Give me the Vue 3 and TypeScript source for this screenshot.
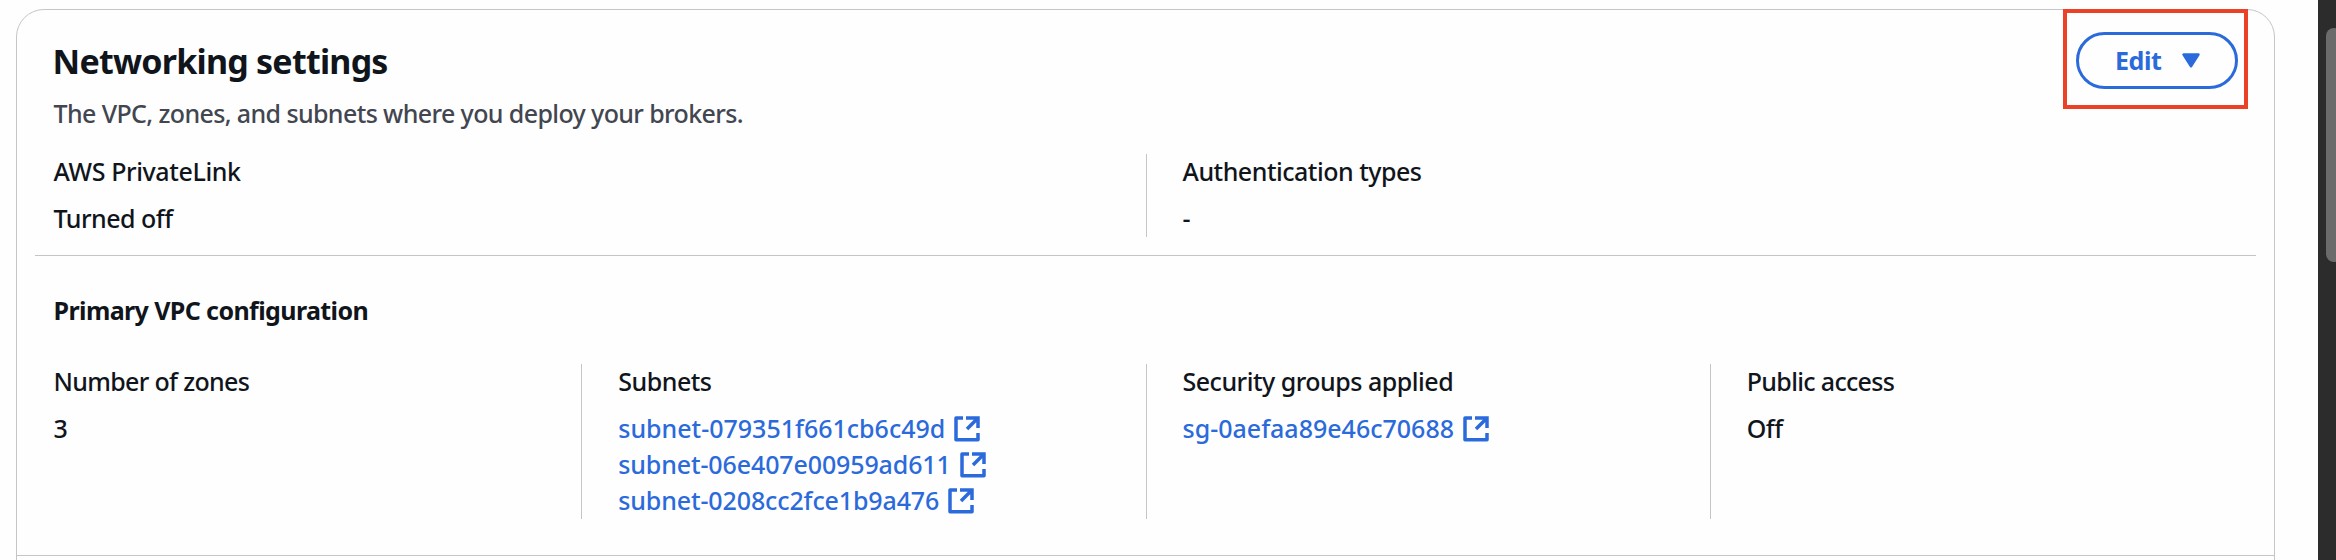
<script setup lang="ts">
interface Field {
  label: string
  labelClass: string
  values: string[]
  link?: boolean
}

const general: Field[] = [
  { label: 'AWS PrivateLink', labelClass: 'loose', values: ['Turned off'] },
  { label: 'Authentication types', labelClass: 'normal', values: ['-'] },
]

const primary: Field[] = [
  { label: 'Number of zones', labelClass: 'tight', values: ['3'] },
  {
    label: 'Subnets',
    labelClass: 'normal',
    link: true,
    values: ['subnet-079351f661cb6c49d', 'subnet-06e407e00959ad611', 'subnet-0208cc2fce1b9a476'],
  },
  { label: 'Security groups applied', labelClass: 'normal', link: true, values: ['sg-0aefaa89e46c70688'] },
  { label: 'Public access', labelClass: 'tight', values: ['Off'] },
]
</script>

<template>
  <div class="page">
    <section class="card">
      <header class="header">
        <div class="heading">
          <h2>Networking settings</h2>
          <p>The VPC, zones, and subnets where you deploy your brokers.</p>
        </div>
        <div class="highlight">
          <button class="edit" type="button">
            <span>Edit</span>
            <svg class="caret" viewBox="0 0 18 15">
              <path d="M1.5 1.5H16.5L9 13.3Z" fill="currentColor" stroke="currentColor" stroke-width="2.4" stroke-linejoin="round" />
            </svg>
          </button>
        </div>
      </header>

      <div class="grid two">
        <div v-for="f in general" :key="f.label" class="field">
          <div class="label" :class="f.labelClass">{{ f.label }}</div>
          <div v-for="v in f.values" :key="v" class="value">{{ v }}</div>
        </div>
      </div>

      <hr class="rule" />
      <h3>Primary VPC configuration</h3>

      <div class="grid four">
        <div v-for="f in primary" :key="f.label" class="field">
          <div class="label" :class="f.labelClass">{{ f.label }}</div>
          <template v-for="v in f.values" :key="v">
            <a v-if="f.link" class="link">
              <span>{{ v }}</span>
              <svg class="external" viewBox="0 0 26 26" fill="none" stroke="currentColor" stroke-width="3.5">
                <path d="M9 2H2V23.7H24V17" stroke-linejoin="round" />
                <path d="M12 2H24V12M24 2L13 13" />
              </svg>
            </a>
            <div v-else class="value">{{ v }}</div>
          </template>
        </div>
      </div>
      <div class="footer"></div>
    </section>
    <div class="scrollbar"><div class="thumb"></div></div>
  </div>
</template>

<style>
body {
  margin: 0;
  background: #fefefe;
}
</style>

<style scoped>
.page {
  display: flex;
  justify-content: space-between;
  box-sizing: border-box;
  width: 2336px;
  height: 560px;
  padding-left: 16px;
  overflow: hidden;
  background: #fefefe;
  color: #10151c;
  font: 500 25px/36px 'Noto Sans', 'Open Sans', sans-serif;
}
.card {
  box-sizing: border-box;
  width: 2259px;
  height: 600px;
  margin-top: 9px;
  border: 1px solid #c4c5c9;
  border-radius: 28px 28px 0 0;
}
.header {
  display: flex;
  justify-content: space-between;
  height: 144px;
  padding: 0 26px 0 36.5px;
}
h2,
h3,
p {
  margin: 0;
}
h2 {
  margin: 27px 0 0 -1px;
  font-size: 34px;
  line-height: 48px;
  font-weight: 700;
  letter-spacing: -0.76px;
}
p {
  margin-top: 10px;
  color: #424650;
  letter-spacing: -0.61px;
}
.highlight {
  display: flex;
  align-items: flex-start;
  box-sizing: border-box;
  width: 185px;
  height: 100px;
  margin-top: -1px;
  padding: 19px 0 0 9px;
  border: 4px solid #eb4127;
}
.edit {
  display: flex;
  align-items: center;
  box-sizing: border-box;
  width: 162px;
  height: 57px;
  padding: 0 0 0 36px;
  border: 3px solid #2b6adb;
  border-radius: 29px;
  background: transparent;
  color: #2b6adb;
  font: inherit;
  font-weight: 700;
  letter-spacing: -0.4px;
}
.edit span {
  padding-bottom: 2px;
  line-height: 34px;
}
.caret {
  width: 18px;
  height: 15px;
  margin-left: 20px;
}
.grid {
  display: grid;
}
.two {
  grid-template-columns: repeat(2, 1fr);
}
.four {
  grid-template-columns: repeat(4, 1fr);
}
.field {
  padding-left: 36px;
}
.field:first-child {
  padding-left: 36.5px;
}
.field + .field {
  border-left: 1px solid #c4c5c9;
}
.label {
  margin-bottom: 13px;
  line-height: 34px;
}
.loose {
  letter-spacing: -0.38px;
}
.normal {
  letter-spacing: -0.49px;
}
.tight {
  letter-spacing: -0.67px;
}
.value {
  padding-bottom: 2px;
  line-height: 34px;
  letter-spacing: -0.5px;
}
.rule {
  height: 1px;
  margin: 18px 18px 0;
  border: 0;
  background: #c4c5c9;
}
h3 {
  margin: 36px 0 36px 36.5px;
  font-size: 25px;
  line-height: 36px;
  font-weight: 700;
  letter-spacing: -0.6px;
}
.link {
  display: flex;
  align-items: center;
  height: 36px;
  color: #2b6adb;
}
.link span {
  padding-bottom: 2px;
  line-height: 34px;
}
.link + .link {
  letter-spacing: -0.12px;
}
.external {
  width: 26px;
  height: 26px;
  margin-left: 9px;
}
.footer {
  margin-top: 36px;
  border-top: 1px solid #c4c5c9;
}
.scrollbar {
  box-sizing: border-box;
  width: 18px;
  height: 560px;
  padding: 28px 0 0 8px;
  background: #2c2c2c;
  overflow: hidden;
}
.thumb {
  width: 16px;
  height: 234px;
  border-radius: 8px;
  background: #6b6b6b;
}
</style>
